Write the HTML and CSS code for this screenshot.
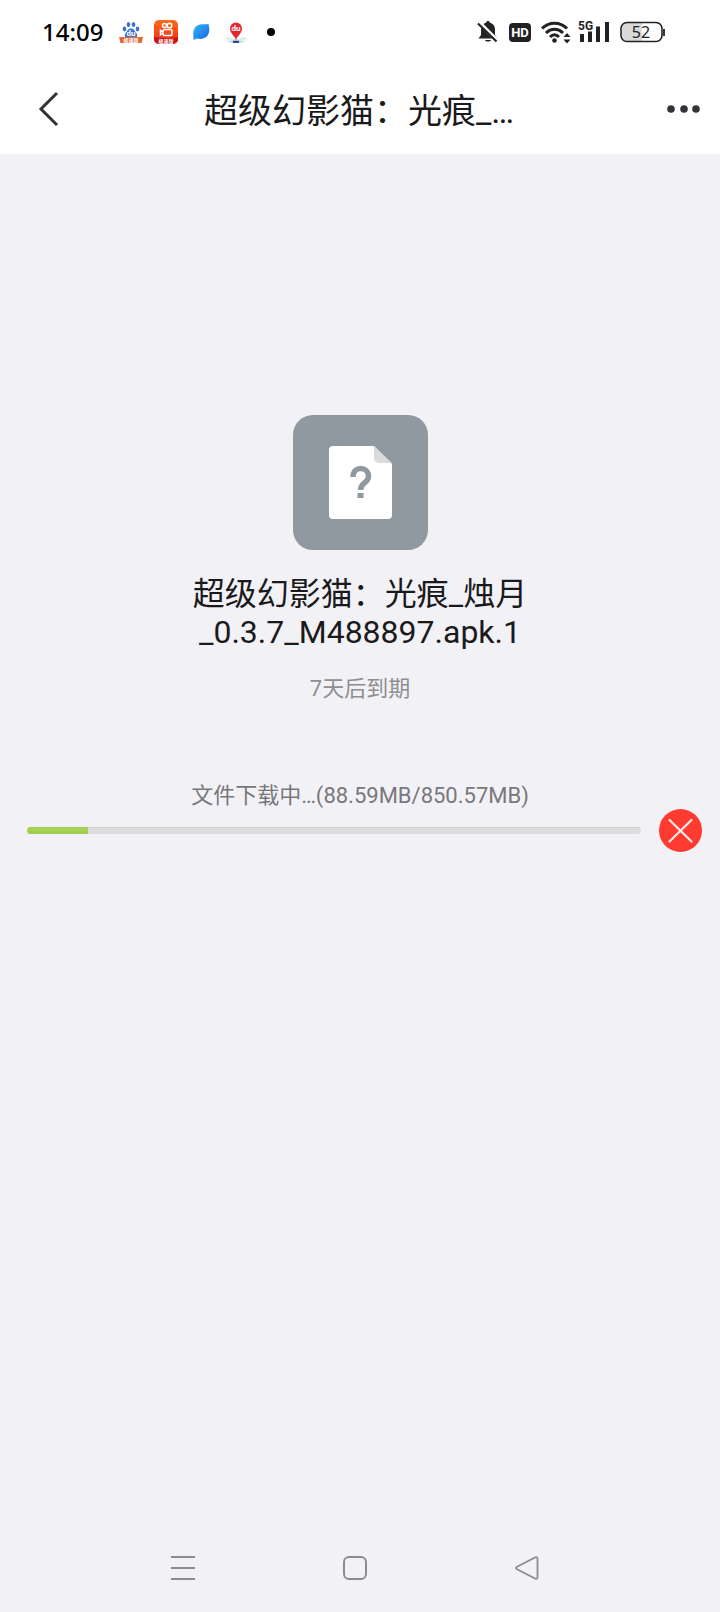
FILE: index.html
```html
<!DOCTYPE html>
<html lang="zh-CN">
<head>
  <meta charset="UTF-8" />
  <title>超级幻影猫：光痕_烛月_0.3.7_M488897.apk.1</title>
  <meta name="viewport" content="width=device-width, initial-scale=1.0" />
  <link rel="stylesheet" href="styles.css">
</head>
<body>
  <div class="status-bar">
    <div class="status-left">
      <span class="clock">14:09</span>
      <svg width="24" height="24" viewBox="0 0 24 24">
        <g fill="#3f6fd0">
          <ellipse cx="5.5" cy="9" rx="1.8" ry="2.4" />
          <ellipse cx="9.5" cy="4.5" rx="1.8" ry="2.5" />
          <ellipse cx="14.5" cy="4.5" rx="1.8" ry="2.5" />
          <ellipse cx="18.5" cy="9" rx="1.8" ry="2.4" />
          <path d="M12 8.5c3 0 3.5 2.5 5 4s2 5-1 5.500H8c-3-.5-2.500-4-1-5.500s2-4 5-4z" />
        </g>
        <text x="12" y="16" class="du">du</text>
        <path d="M0 17h24l-1.500 6H1.500z" fill="#e8632f" />
        <text x="12" y="22" class="tiny-label">极速版</text>
      </svg>
      <svg width="24" height="24" viewBox="0 0 24 24">
        <defs>
          <linearGradient id="ks" x1="0" y1="0" x2="0" y2="1">
            <stop offset="0" stop-color="#ff6a1c" />
            <stop offset="1" stop-color="#f02a1c" />
          </linearGradient>
        </defs>
        <rect width="24" height="24" rx="5" fill="url(#ks)" />
        <path d="M0 17q12 2 24 0v2a5 5 0 0 1-5 5H5a5 5 0 0 1-5-5z" fill="#c81616" />
        <g fill="none" stroke="#fff" stroke-width="1.5">
          <circle cx="10.5" cy="5.5" r="2" />
          <circle cx="15.5" cy="5.5" r="2.3" />
          <rect x="9" y="9.5" width="9" height="6" rx="1.8" />
          <path d="M9 12l-2.500-1.800v4.600L9 13" />
        </g>
        <text x="12" y="23" class="tiny-label">极速版</text>
      </svg>
      <svg width="24" height="24" viewBox="0 0 24 24">
        <defs>
          <linearGradient id="leaf" x1="0" y1="0" x2="1" y2="1">
            <stop offset="0" stop-color="#35b4f7" />
            <stop offset="1" stop-color="#1765e8" />
          </linearGradient>
        </defs>
        <path d="M19.500 4c.3 2 .8 3.500.8 5.500 0 6-4 9.500-9 9.500-1.500 0-2.500-.2-3.500-.5L4.500 20c.3-2-.3-3.500-.3-6C4.200 8 8 4.300 13 4.300c2.500 0 4.500.2 6.500-.3z" fill="url(#leaf)" />
      </svg>
      <svg width="24" height="24" viewBox="0 0 24 24">
        <path d="M1 18l5-1 6 3 6-3 5 1-4 5H5z" fill="#dcefe8" />
        <path d="M6 22l6-3 6 3z" fill="#a9bce8" />
        <path d="M12 20c-1-4-6-6.500-6-11.500a6 6 0 0 1 12 0c0 5-5 7.500-6 11.500z" fill="#e5262b" />
        <path d="M9 22h6" stroke="#2c4a94" stroke-width="2" />
        <text x="12" y="11" class="du">du</text>
      </svg>
      <span class="dot"></span>
    </div>
    <div class="status-right">
      <svg width="22" height="24" viewBox="0 0 22 24">
        <path d="M11 1c1 0 1.700.7 1.700 1.600C16 3.400 18 6 18 9.500V15l2.500 3.500H1.500L4 15V9.500C4 6 6 3.400 9.300 2.600 9.300 1.700 10 1 11 1zM8 20h6c-.5 2-5.500 2-6 0z" fill="#222" />
        <path d="M2.500 3l18 18" stroke="#fff" stroke-width="4" />
        <path d="M1 3.500l18.500 18" stroke="#222" stroke-width="2.2" />
      </svg>
      <svg width="22" height="24" viewBox="0 0 22 24">
        <rect y="3" width="22" height="19" rx="4" fill="#222" />
        <text x="11" y="17" class="hd">HD</text>
      </svg>
      <svg class="wifi" width="30" height="24" viewBox="0 0 30 24">
        <g fill="none" stroke="#222" stroke-width="3">
          <path d="M1 8.500c7-7 18-7 25 0" />
          <path d="M5 13c5-5 12-5 17 0" />
          <path d="M9 17c3-3 6-3 9 0" />
        </g>
        <circle cx="13.5" cy="20.5" r="2.3" fill="#222" />
        <path d="M22.500 17l3.500-4 3.500 4zM22.500 19.500l3.500 4 3.500-4z" fill="#222" />
      </svg>
      <svg width="32" height="24" viewBox="0 0 32 24">
        <text x="0" y="10" class="net">5G</text>
        <path d="M4 14v8M12 11.500V22M20 6.500V22M29 2v20" stroke="#222" stroke-width="4" />
      </svg>
      <svg width="46" height="24" viewBox="0 0 46 24">
        <rect x="1" y="2.500" width="41" height="19" rx="6" fill="#fff" />
        <path d="M7 3h15v18H7a5 5 0 0 1-5-5V8a5 5 0 0 1 5-5z" fill="#d9d9d9" />
        <rect x="1" y="2.500" width="41" height="19" rx="6" fill="none" stroke="#222" stroke-width="1.600" />
        <path d="M44 9v7" stroke="#222" stroke-width="1.800" />
        <text x="21" y="18" class="percent">52</text>
      </svg>
    </div>
  </div>

  <header>
    <button type="button" class="icon-btn back" aria-label="返回">
      <svg width="24" height="36" viewBox="0 0 24 36">
        <path d="M20 2L4 18l16 16" fill="none" stroke="#333" stroke-width="3" />
      </svg>
    </button>
    <h1>超级幻影猫：光痕_…</h1>
    <button type="button" class="icon-btn more" aria-label="更多">
      <svg width="34" height="10" viewBox="0 0 34 10">
        <g fill="#333338">
          <circle cx="4" cy="5" r="3.8" />
          <circle cx="17" cy="5" r="3.8" />
          <circle cx="29" cy="5" r="3.8" />
        </g>
      </svg>
    </button>
  </header>

  <main>
    <svg width="135" height="135" viewBox="0 0 135 135">
      <rect width="135" height="135" rx="20" fill="#9099a0" />
      <path d="M40 31h41l18 18v51a4 4 0 0 1-4 4H40a4 4 0 0 1-4-4V35a4 4 0 0 1 4-4z" fill="#fff" />
      <path d="M81 31l18 17H86a5 5 0 0 1-5-5z" fill="#d9dadb" />
      <path d="M60 62c0-11.500 15.500-11 15.500-.5 0 6.500-8 6-8 13.500" fill="none" stroke="#9099a0" stroke-width="5.5" />
      <rect x="64.5" y="78" width="6" height="5" fill="#9099a0" />
    </svg>
    <h2>超级幻影猫：光痕_烛月_0.3.7_M488897.apk.1</h2>
    <p class="expire">7天后到期</p>
    <label class="download-label" for="download">文件下载中…(88.59MB/850.57MB)</label>
    <div class="download">
      <progress id="download" value="10" max="100"></progress>
      <button type="button" class="icon-btn" aria-label="取消下载">
        <svg width="43" height="43" viewBox="0 0 43 43">
          <circle cx="21.5" cy="21.5" r="21.5" fill="#ff3b30" />
          <path d="M10.500 11l22 21.500M32.500 11l-22 21.500" stroke="#fff" stroke-opacity=".9" stroke-width="2.2" stroke-linecap="round" />
        </svg>
      </button>
    </div>
  </main>

  <nav>
    <button type="button" class="icon-btn" aria-label="最近任务">
      <svg width="24" height="26" viewBox="0 0 24 26">
        <path d="M0 2h24M0 13h24M0 24h24" stroke="#8b8b90" stroke-width="2" />
      </svg>
    </button>
    <button type="button" class="icon-btn" aria-label="主屏幕">
      <svg width="24" height="26" viewBox="0 0 24 26">
        <rect x="1" y="2" width="22" height="22" rx="5" fill="none" stroke="#8b8b90" stroke-width="2" />
      </svg>
    </button>
    <button type="button" class="icon-btn" aria-label="后退">
      <svg width="24" height="26" viewBox="0 0 24 26">
        <path d="M20.500 2.300L2 11.700q-2 1.300 0 2.600l18.500 9.400q2 .6 2-1.500V3.800q0-2.100-2-1.500z" fill="none" stroke="#8b8b90" stroke-width="1.800" />
      </svg>
    </button>
  </nav>
</body>
</html>
```
FILE: styles.css
```css
* {
  box-sizing: border-box;
  margin: 0;
  padding: 0;
}

body {
  display: flex;
  flex-direction: column;
  min-height: 100vh;
  background: #f2f1f6;
  color: #1a1a1c;
  font-family: Roboto, 'Noto Sans CJK SC', sans-serif;
}

svg {
  display: block;
  flex: none;
}

.status-bar {
  display: flex;
  align-items: center;
  justify-content: space-between;
  height: 64px;
  padding: 0 54px 0 42px;
  background: #fff;
}

.status-left {
  display: flex;
  align-items: center;
  gap: 11px;
}

.status-right {
  display: flex;
  align-items: center;
  gap: 10px;
}

.wifi {
  margin-right: -3px;
}

.clock {
  margin-right: 5px;
  font-family: 'Noto Sans', sans-serif;
  font-size: 24px;
  font-weight: 500;
  line-height: 32px;
  color: #000;
}

.dot {
  width: 8px;
  height: 8px;
  margin-left: 8px;
  border-radius: 50%;
  background: #000;
}

.status-bar text {
  font-family: Roboto, 'Noto Sans CJK SC', sans-serif;
  font-weight: 700;
  text-anchor: middle;
  fill: #fff;
}

.status-bar .du {
  font-size: 8px;
}

.status-bar .tiny-label {
  font-size: 5px;
}

.status-bar .hd {
  font-size: 13px;
}

.status-bar .net {
  font-size: 12px;
  text-anchor: start;
  fill: #222;
}

.status-bar .percent {
  font-family: 'Noto Sans', sans-serif;
  font-size: 16px;
  font-weight: 400;
  fill: #222;
}

header {
  display: flex;
  align-items: center;
  justify-content: space-between;
  height: 90px;
  padding: 0 19px 0 37px;
  background: #fff;
}

.icon-btn {
  display: flex;
  flex: none;
  align-items: center;
  border: none;
  background: none;
  cursor: pointer;
}

.back {
  width: 48px;
  height: 48px;
}

.more {
  justify-content: flex-end;
  width: 68px;
  height: 48px;
}

h1 {
  padding-top: 4px;
  font-size: 34px;
  font-weight: 400;
  line-height: 44px;
}

main {
  flex: 1;
  display: flex;
  flex-direction: column;
  align-items: center;
  padding-top: 261px;
}

h2 {
  max-width: 400px;
  margin-top: 25px;
  font-size: 32px;
  font-weight: 400;
  line-height: 38px;
  text-align: center;
}

.expire {
  margin-top: 24px;
  font-size: 22px;
  line-height: 28px;
  color: #8e8e93;
}

.download-label {
  margin-top: 80px;
  font-size: 22px;
  line-height: 26px;
  color: #78787c;
}

.download {
  display: flex;
  align-items: center;
  gap: 18px;
  width: 100%;
  padding: 0 18px 0 27px;
}

progress {
  flex: 1;
  height: 7px;
  border: none;
  border-radius: 4px;
  overflow: hidden;
  background: #dcdcdc;
  appearance: none;
}

progress::-webkit-progress-bar {
  background: #dcdcdc;
  box-shadow: inset 0 1px #cfcfcf;
}

progress::-webkit-progress-value {
  background: linear-gradient(#9cc05a, #aad553 20%, #9cca4c);
}

nav {
  display: flex;
  justify-content: center;
  gap: 148px;
  padding: 0 10px 31px 0;
}
```
